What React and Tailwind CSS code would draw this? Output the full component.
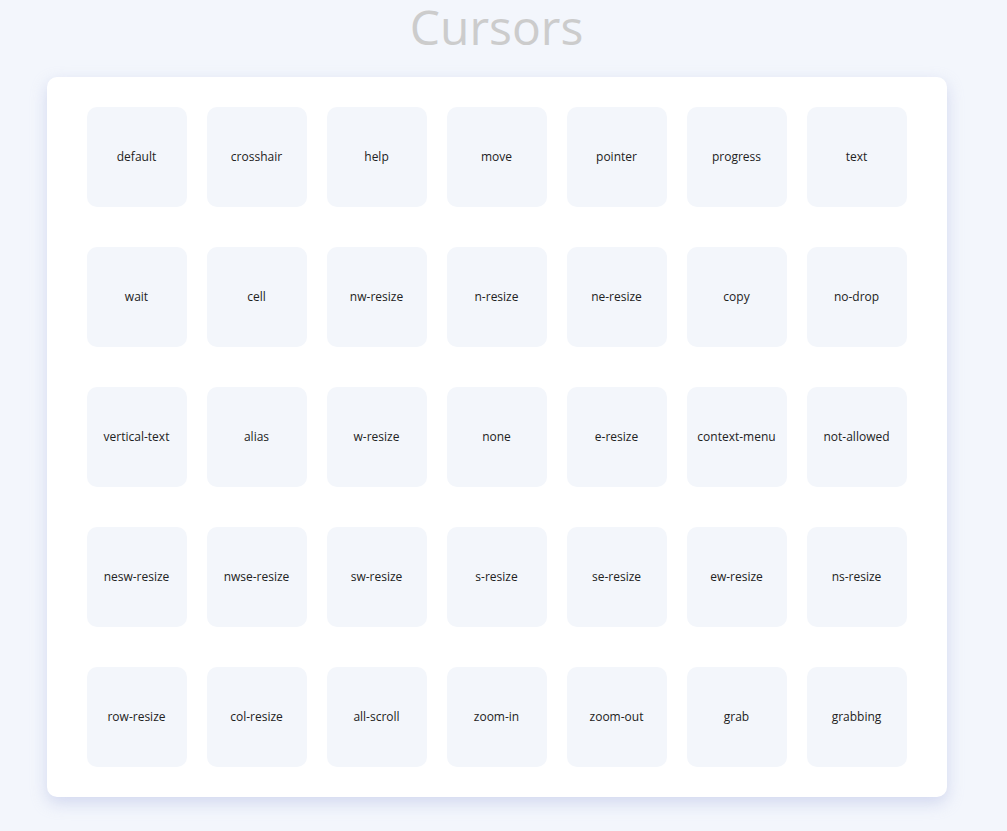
const CURSORS = [
  'default', 'crosshair', 'help', 'move', 'pointer', 'progress', 'text',
  'wait', 'cell', 'nw-resize', 'n-resize', 'ne-resize', 'copy', 'no-drop',
  'vertical-text', 'alias', 'w-resize', 'none', 'e-resize', 'context-menu', 'not-allowed',
  'nesw-resize', 'nwse-resize', 'sw-resize', 's-resize', 'se-resize', 'ew-resize', 'ns-resize',
  'row-resize', 'col-resize', 'all-scroll', 'zoom-in', 'zoom-out', 'grab', 'grabbing',
]

export default function App() {
  return (
    <div
      className="min-h-[831px] bg-[#f3f6fc] overflow-hidden"
      style={{ fontFamily: '"Open Sans", "Noto Sans", sans-serif' }}
    >
      <div className="w-[993px] flex flex-col items-center">
        <h1 className="text-[48px] leading-none text-[#cccccc] mt-[3px] h-[74px]">Cursors</h1>
        <div className="bg-white rounded-[10px] px-[40px] py-[30px] shadow-[0_6px_16px_rgba(170,180,225,0.45)]">
          <div className="grid grid-cols-7 gap-x-[20px] gap-y-[40px]">
            {CURSORS.map((c) => (
              <div
                key={c}
                className="w-[100px] h-[100px] rounded-[10px] bg-[#f3f6fb] flex items-center justify-center text-[12px] text-[#222]"
                style={{ cursor: c }}
              >
                {c}
              </div>
            ))}
          </div>
        </div>
      </div>
    </div>
  )
}
